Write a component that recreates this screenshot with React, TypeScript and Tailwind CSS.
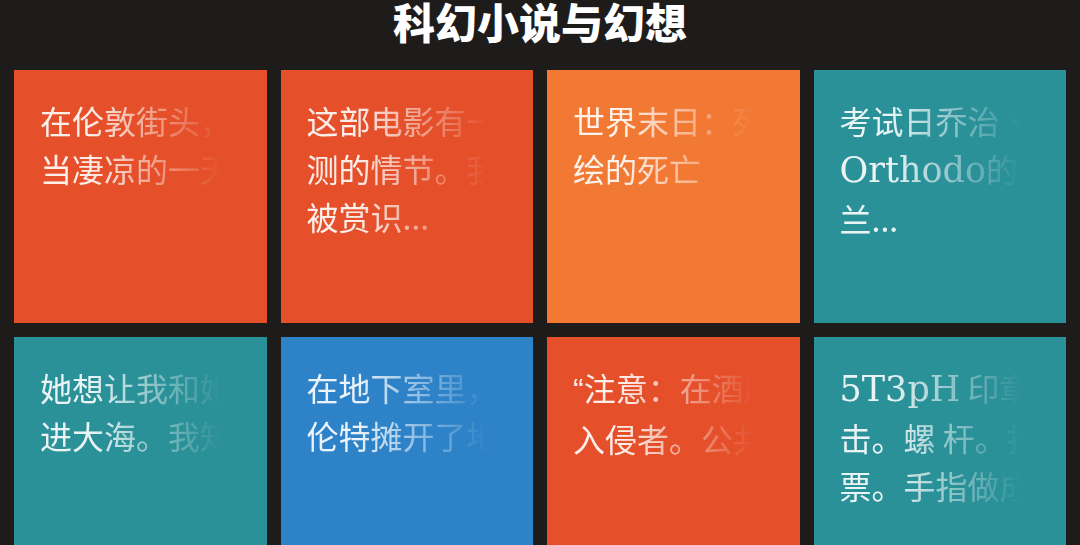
const tiles = [
  { color: 'bg-[#e5502b]', lines: ['在伦敦街头，一个相', '当凄凉的一天里...'] },
  { color: 'bg-[#e5502b]', lines: ['这部电影有一个难以预', '测的情节。我的努力没', '被赏识...'] },
  { color: 'bg-[#f27934]', lines: ['世界末日：死神所描', '绘的死亡'] },
  { color: 'bg-[#2b9199]', lines: ['考试日乔治·', 'Orthodo的故事', '兰...'] },
  { color: 'bg-[#2b9199]', lines: ['她想让我和她一起走', '进大海。我知道她...'] },
  { color: 'bg-[#2d82c8]', lines: ['在地下室里，布', '伦特摊开了地图...'] },
  { color: 'bg-[#e5502b]', lines: ['“注意：在酒店的', '入侵者。公共场所...'] },
  { color: 'bg-[#2b9199]', lines: ['5T3pH 印章', '击。螺 杆。打', '票。手指做成...'] },
]

// latin words get the serif face, the opening quote a proportional one
function Line({ text }: { text: string }) {
  const parts = text.split(/([A-Za-z0-9]+|“)/)
  return (
    <div className="whitespace-nowrap leading-[48px]">
      {parts.map((p, i) =>
        /^[A-Za-z0-9]+$/.test(p) ? (
          <span key={i} className="font-['DejaVu_Serif',serif] text-[35px]">
            {p}
          </span>
        ) : p === '“' ? (
          <span key={i} className="font-['Liberation_Sans',sans-serif]">
            {p}
          </span>
        ) : (
          <span key={i}>{p}</span>
        ),
      )}
    </div>
  )
}

export default function App() {
  return (
    <div className="h-[545px] w-[1080px] overflow-hidden bg-[#1e1b1b] font-['Noto_Sans_CJK_SC','Noto_Sans',sans-serif]">
      <h1 className="h-[42px] text-center text-[42px] font-black leading-[42px] text-white">
        科幻小说与幻想
      </h1>
      <div className="mt-[28px] grid grid-cols-4 gap-[14px] px-[14px]">
        {tiles.map((t, i) => (
          <div key={i} className={`h-[253px] overflow-hidden ${t.color} px-[26px] pt-[26px]`}>
            <div className="text-[32px] font-normal text-white/90 [-webkit-mask-image:linear-gradient(to_right,black_50px,transparent_180px)] [mask-image:linear-gradient(to_right,black_50px,transparent_180px)]">
              {t.lines.map((l, j) => (
                <Line key={j} text={l} />
              ))}
            </div>
          </div>
        ))}
      </div>
    </div>
  )
}
